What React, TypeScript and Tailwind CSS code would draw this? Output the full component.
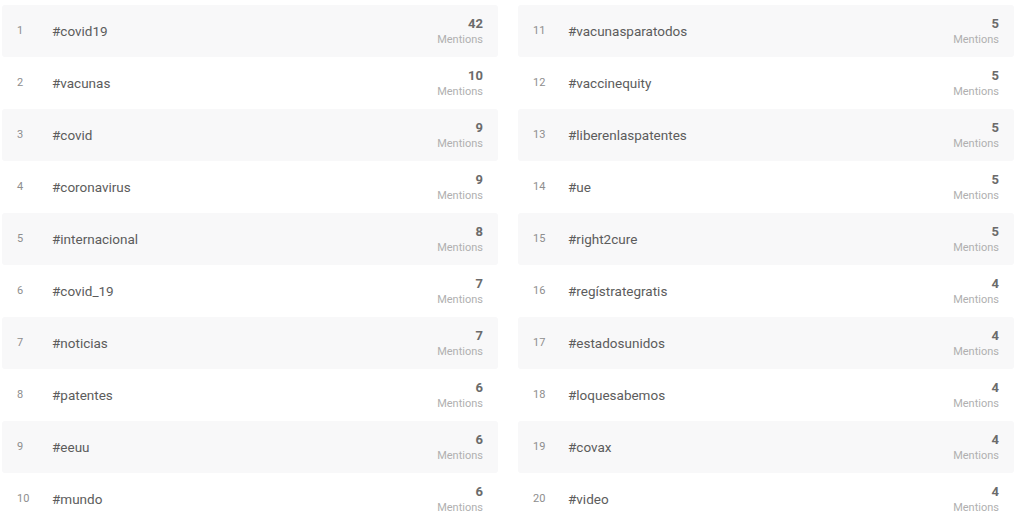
const left: [string, number][] = [
  ["#covid19", 42],
  ["#vacunas", 10],
  ["#covid", 9],
  ["#coronavirus", 9],
  ["#internacional", 8],
  ["#covid_19", 7],
  ["#noticias", 7],
  ["#patentes", 6],
  ["#eeuu", 6],
  ["#mundo", 6],
];

const right: [string, number][] = [
  ["#vacunasparatodos", 5],
  ["#vaccinequity", 5],
  ["#liberenlaspatentes", 5],
  ["#ue", 5],
  ["#right2cure", 5],
  ["#regístrategratis", 4],
  ["#estadosunidos", 4],
  ["#loquesabemos", 4],
  ["#covax", 4],
  ["#video", 4],
];

function Row({ rank, tag, count }: { rank: number; tag: string; count: number }) {
  const odd = rank % 2 === 1;
  return (
    <div
      className={
        "h-[52px] shrink-0 flex items-center rounded-[3px] pr-[15px] " +
        (odd ? "bg-[#f8f8f9]" : "bg-white")
      }
    >
      <span className="w-[50px] pl-[15px] text-[11px] text-[#8e8e8e]">{rank}</span>
      <span className="flex-1 text-[13.5px] text-[#5c5c5c]">{tag}</span>
      <div className="flex flex-col items-end leading-none">
        <span className="text-[13px] font-bold text-[#6b6b6b]">{count}</span>
        <span className="mt-[4px] text-[11px] text-[#b0b0b0]">Mentions</span>
      </div>
    </div>
  );
}

export default function App() {
  return (
    <div
      className="w-[1024px] h-[520px] overflow-hidden bg-white pt-[5px] pl-[2px] flex gap-[20px]"
      style={{ fontFamily: "Roboto, 'Liberation Sans', sans-serif" }}
    >
      <div className="w-[496px] shrink-0 flex flex-col">
        {left.map(([tag, count], i) => (
          <Row key={tag} rank={i + 1} tag={tag} count={count} />
        ))}
      </div>
      <div className="w-[496px] shrink-0 flex flex-col">
        {right.map(([tag, count], i) => (
          <Row key={tag} rank={i + 11} tag={tag} count={count} />
        ))}
      </div>
    </div>
  );
}
